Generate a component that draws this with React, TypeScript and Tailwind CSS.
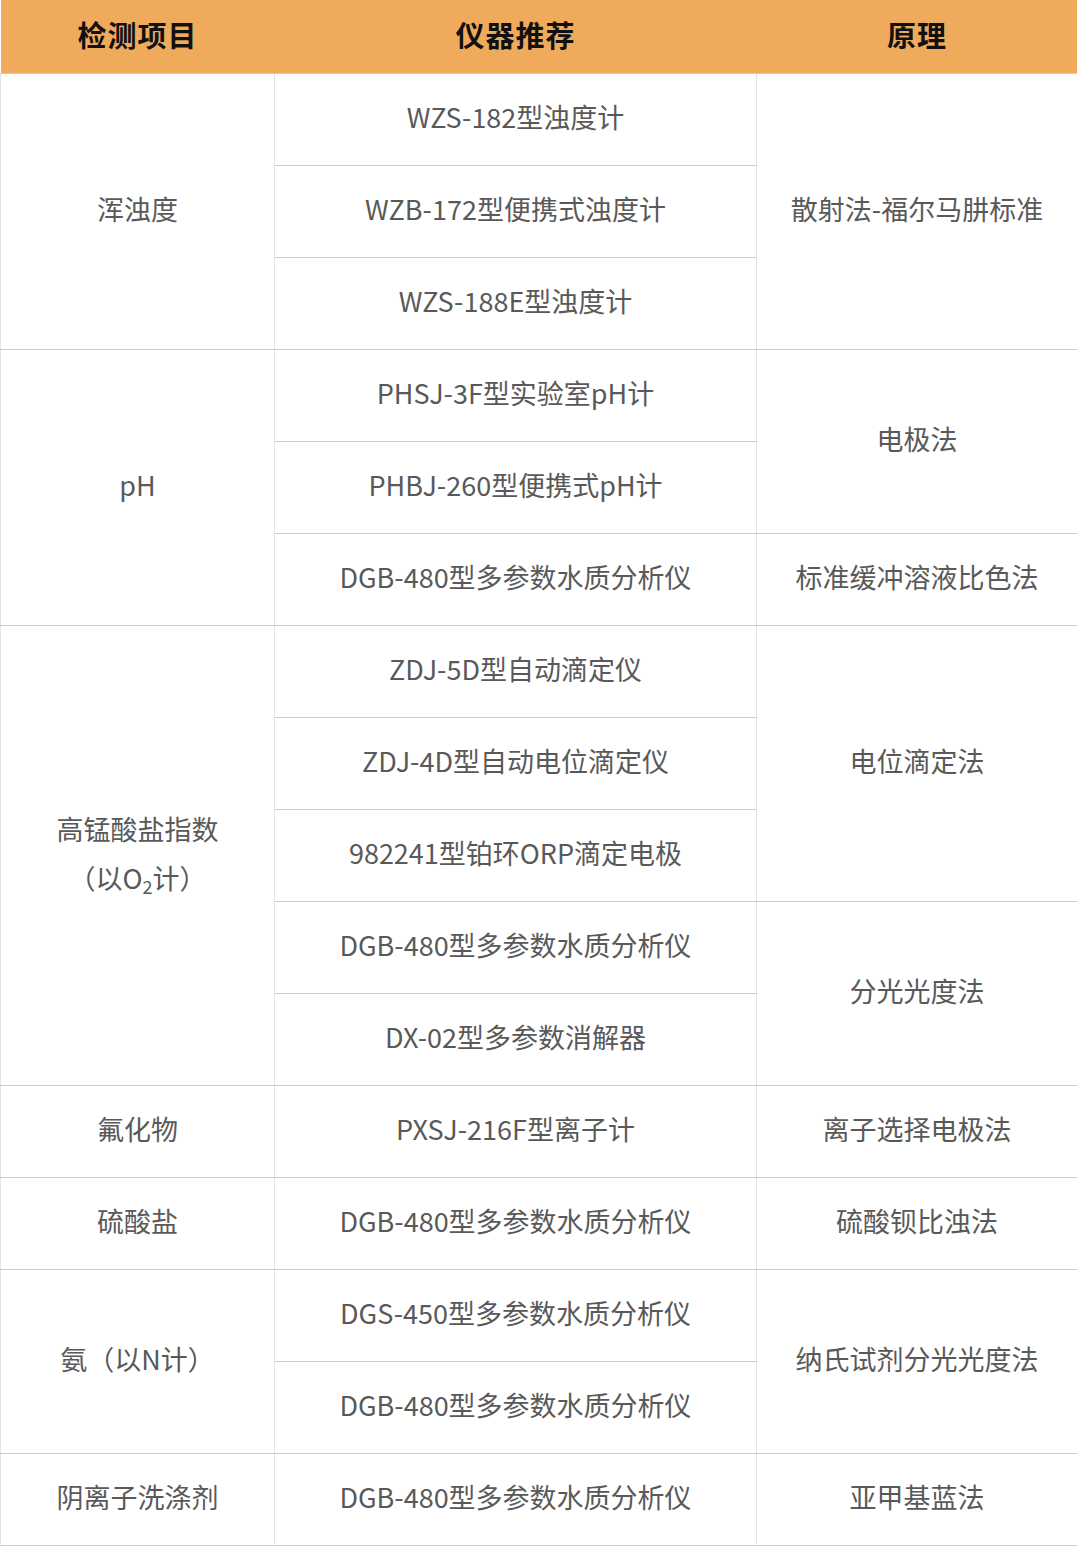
const font = {
  fontFamily: '"Noto Sans CJK SC", "Noto Sans", sans-serif',
};

type Cell = { text: React.ReactNode; rowSpan?: number };
type Row = Cell[];

const rows: Row[] = [
  [{ text: "浑浊度", rowSpan: 3 }, { text: "WZS-182型浊度计" }, { text: "散射法-福尔马肼标准", rowSpan: 3 }],
  [{ text: "WZB-172型便携式浊度计" }],
  [{ text: "WZS-188E型浊度计" }],
  [{ text: "pH", rowSpan: 3 }, { text: "PHSJ-3F型实验室pH计" }, { text: "电极法", rowSpan: 2 }],
  [{ text: "PHBJ-260型便携式pH计" }],
  [{ text: "DGB-480型多参数水质分析仪" }, { text: "标准缓冲溶液比色法" }],
  [
    {
      text: (
        <span className="leading-[49px]">
          高锰酸盐指数
          <br />
          （以O<sub className="text-[18px] leading-none">2</sub>计）
        </span>
      ),
      rowSpan: 5,
    },
    { text: "ZDJ-5D型自动滴定仪" },
    { text: "电位滴定法", rowSpan: 3 },
  ],
  [{ text: "ZDJ-4D型自动电位滴定仪" }],
  [{ text: "982241型铂环ORP滴定电极" }],
  [{ text: "DGB-480型多参数水质分析仪" }, { text: "分光光度法", rowSpan: 2 }],
  [{ text: "DX-02型多参数消解器" }],
  [{ text: "氟化物" }, { text: "PXSJ-216F型离子计" }, { text: "离子选择电极法" }],
  [{ text: "硫酸盐" }, { text: "DGB-480型多参数水质分析仪" }, { text: "硫酸钡比浊法" }],
  [{ text: "氨（以N计）", rowSpan: 2 }, { text: "DGS-450型多参数水质分析仪" }, { text: "纳氏试剂分光光度法", rowSpan: 2 }],
  [{ text: "DGB-480型多参数水质分析仪" }],
  [{ text: "阴离子洗涤剂" }, { text: "DGB-480型多参数水质分析仪" }, { text: "亚甲基蓝法" }],
];

export default function App() {
  return (
    <div className="w-[1077px] bg-white" style={font}>
      <table className="w-[1077px] table-fixed border-collapse">
        <colgroup>
          <col className="w-[274px]" />
          <col className="w-[482px]" />
          <col className="w-[321px]" />
        </colgroup>
        <thead>
          <tr className="h-[73px] bg-[#efaa5b]">
            {["检测项目", "仪器推荐", "原理"].map((h) => (
              <th
                key={h}
                className="border-b border-b-[#cccccc] p-0 pb-[3px] text-center text-[29px] font-bold tracking-[1px] text-[#111111]"
              >
                {h}
              </th>
            ))}
          </tr>
        </thead>
        <tbody>
          {rows.map((row, i) => (
            <tr key={i} className="h-[92px]">
              {row.map((c, j) => (
                <td
                  key={j}
                  rowSpan={c.rowSpan}
                  className="border border-x-[#e3e3e3] border-y-[#cccccc] p-0 pb-[4px] text-center align-middle text-[27px] text-[#595959]"
                >
                  {c.text}
                </td>
              ))}
            </tr>
          ))}
        </tbody>
      </table>
    </div>
  );
}
